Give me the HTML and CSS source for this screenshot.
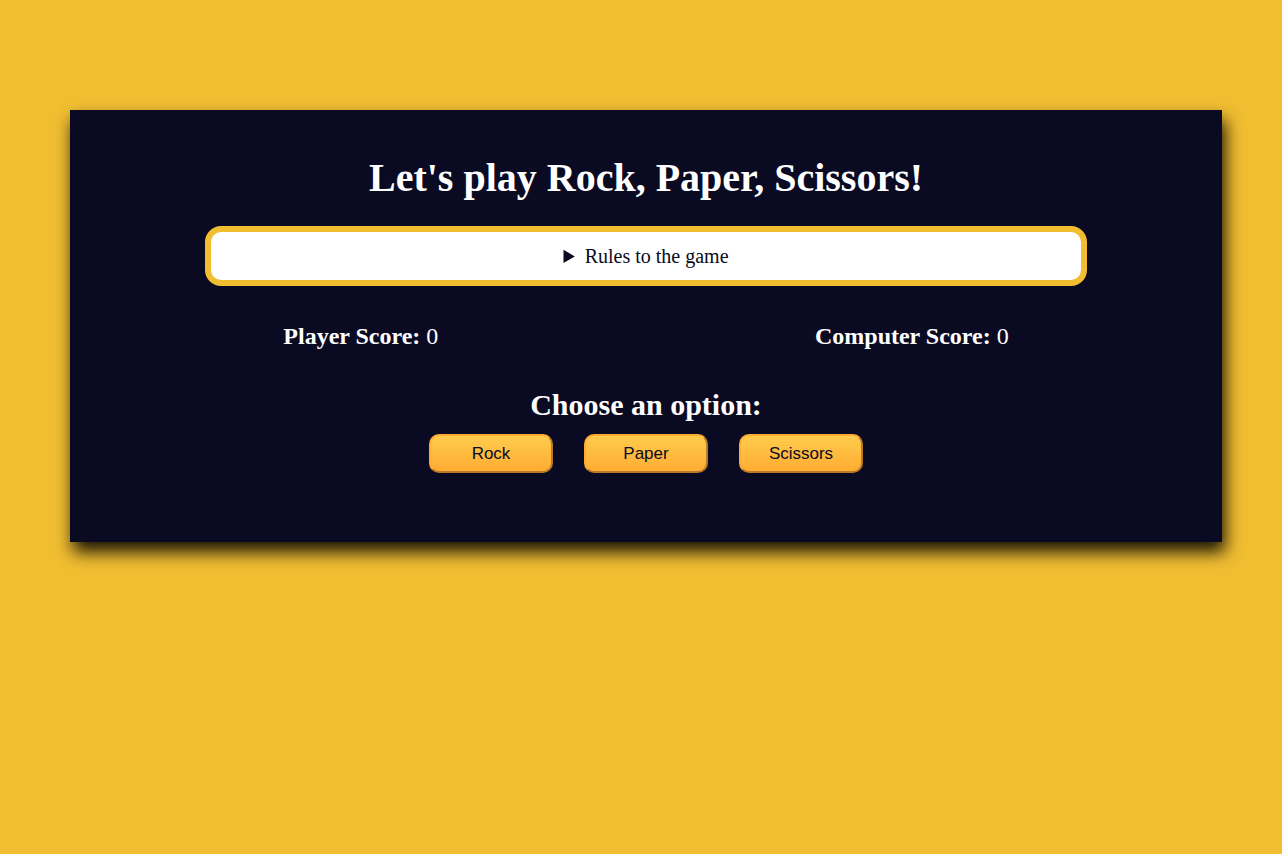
FILE: index.html
```html
<!DOCTYPE html>
<html lang="en">
<head>
<meta charset="UTF-8">
<title>Rock, Paper, Scissors</title>
<link rel="stylesheet" href="styles.css">
</head>
<body>
<main class="page">
  <section class="card">
    <h1 class="title">Let's play Rock, Paper, Scissors!</h1>
    <details class="rules">
      <summary class="rules-summary">Rules to the game</summary>
    </details>
    <div class="scores">
      <p class="score"><strong>Player Score:</strong> <span>0</span></p>
      <p class="score"><strong>Computer Score:</strong> <span>0</span></p>
    </div>
    <h2 class="choose">Choose an option:</h2>
    <div class="options">
      <button class="btn" type="button">Rock</button>
      <button class="btn" type="button">Paper</button>
      <button class="btn" type="button">Scissors</button>
    </div>
  </section>
</main>
</body>
</html>
```
FILE: styles.css
```css
*, *::before, *::after {
  box-sizing: border-box;
}

html, body {
  margin: 0;
  padding: 0;
}

body {
  background-color: #f1be32;
  font-family: "Liberation Serif", "Times New Roman", serif;
  color: #ffffff;
  min-height: 854px;
}

.page {
  padding: 110px 60px 0 70px;
}

.card {
  background-color: #0a0a23;
  height: 432px;
  text-align: center;
  padding: 45px 25px 0;
  box-shadow: 3px 10px 16px rgba(0, 0, 0, 0.9);
}

.title {
  margin: 0;
  font-size: 40px;
  font-weight: bold;
  line-height: 46px;
}

.rules {
  width: 882px;
  margin: 25px auto 0;
  background-color: #ffffff;
  border: 6px solid #f1be32;
  border-radius: 16px;
  color: #0a0a23;
  font-size: 20px;
}

.rules-summary {
  line-height: 48px;
  cursor: pointer;
}

.scores {
  display: flex;
  justify-content: space-around;
  margin-top: 36px;
}

.score {
  margin: 0;
  font-size: 24px;
  line-height: 28px;
}

.choose {
  margin: 38px 0 0;
  font-size: 30px;
  line-height: 34px;
}

.options {
  display: flex;
  justify-content: center;
  gap: 31px;
  margin-top: 12px;
}

.btn {
  width: 124px;
  height: 39px;
  padding: 0;
  font-family: "Liberation Sans", Arial, sans-serif;
  font-size: 17px;
  color: #0a0a23;
  background-color: #feac32;
  background-image: linear-gradient(#fecc4c, #ffac33);
  border-width: 2px;
  border-style: solid;
  border-color: #feac32 #b87a26 #b87a26 #feac32;
  border-radius: 10px;
  cursor: pointer;
}
```
